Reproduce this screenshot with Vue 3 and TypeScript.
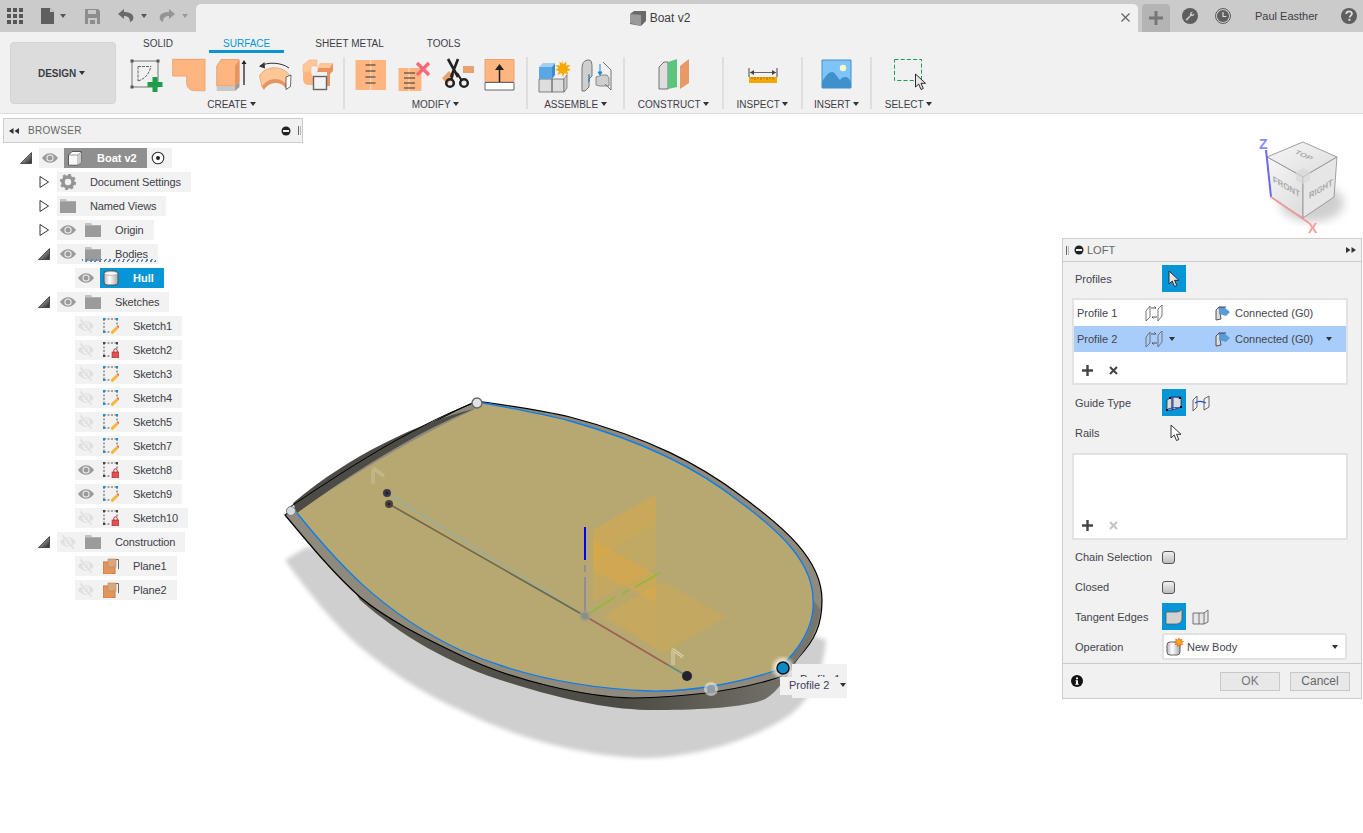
<script setup lang="ts">
interface TreeRow {
  label: string
  level: number
  exp?: 'open' | 'closed'
  eye?: 'on' | 'off'
  icon: string
  root?: boolean
  active?: boolean
  hatch?: boolean
}

const rows: TreeRow[] = [
  { label: 'Boat v2', level: 0, exp: 'open', eye: 'on', icon: 'comp', root: true },
  { label: 'Document Settings', level: 1, exp: 'closed', icon: 'gear' },
  { label: 'Named Views', level: 1, exp: 'closed', icon: 'folder' },
  { label: 'Origin', level: 1, exp: 'closed', eye: 'on', icon: 'folder' },
  { label: 'Bodies', level: 1, exp: 'open', eye: 'on', icon: 'folder', hatch: true },
  { label: 'Hull', level: 2, eye: 'on', icon: 'body', active: true },
  { label: 'Sketches', level: 1, exp: 'open', eye: 'on', icon: 'folder' },
  { label: 'Sketch1', level: 2, eye: 'off', icon: 'sketch' },
  { label: 'Sketch2', level: 2, eye: 'off', icon: 'sketch-lock' },
  { label: 'Sketch3', level: 2, eye: 'off', icon: 'sketch' },
  { label: 'Sketch4', level: 2, eye: 'off', icon: 'sketch' },
  { label: 'Sketch5', level: 2, eye: 'off', icon: 'sketch' },
  { label: 'Sketch7', level: 2, eye: 'off', icon: 'sketch' },
  { label: 'Sketch8', level: 2, eye: 'on', icon: 'sketch-lock' },
  { label: 'Sketch9', level: 2, eye: 'on', icon: 'sketch' },
  { label: 'Sketch10', level: 2, eye: 'off', icon: 'sketch-lock' },
  { label: 'Construction', level: 1, exp: 'open', eye: 'off', icon: 'folder' },
  { label: 'Plane1', level: 2, eye: 'off', icon: 'plane' },
  { label: 'Plane2', level: 2, eye: 'off', icon: 'plane' }
]

const tabs = ['SOLID', 'SURFACE', 'SHEET METAL', 'TOOLS']

// hull outlines, traced from the model view
const bluePath =
  'M297 513C335 560 380 612 460 650C510 672 570 688 650 691C690 692 740 683 777 670C800 650 815 625 813 600C813 565 785 535 740 502C700 470 645 442 570 421C540 413 510 408 483 403'
const deckPath = bluePath + 'L473 410C420 435 350 475 297 513Z'
const rimPath =
  'M285 515C345 475 410 430 477 401C510 406 540 410 570 417C650 438 700 465 740 495C785 528 822 560 822 600C822 625 815 640 798 658L780 677C740 690 690 697 633 698C585 697 510 680 460 655C420 636 385 618 360 597C335 575 310 545 285 515Z'
const underPath =
  'M355 592 360 600C400 635 450 665 510 683C570 702 620 711 660 710C700 710 745 707 763 700C775 695 790 675 800 655L700 640Z'
</script>

<template>
  <div class="app">
    <svg class="sprite" width="0" height="0">
      <defs>
        <linearGradient id="tri" x1="0" y1="0" x2="1" y2="1">
          <stop offset="0" stop-color="#ddd" />
          <stop offset="1" stop-color="#222" />
        </linearGradient>
        <linearGradient id="cyl" x1="0" y1="0" x2="1" y2="0">
          <stop offset="0" stop-color="#b9b9b9" />
          <stop offset=".4" stop-color="#fff" />
          <stop offset="1" stop-color="#aaa" />
        </linearGradient>
        <linearGradient id="face" x1="0" y1="0" x2="1" y2="1">
          <stop offset="0" stop-color="#f7f7f7" />
          <stop offset="1" stop-color="#dcdcdc" />
        </linearGradient>
        <linearGradient id="under" x1="0" y1="0" x2="1" y2="0">
          <stop offset="0" stop-color="#5a5850" />
          <stop offset=".6" stop-color="#4c4b44" />
          <stop offset="1" stop-color="#77746a" />
        </linearGradient>
        <filter id="blur2"><feGaussianBlur stdDeviation="2" /></filter>
        <filter id="blur5"><feGaussianBlur stdDeviation="5" /></filter>
      </defs>
      <symbol id="exp-open" viewBox="0 0 12 12"><path d="M.5 11.500 11.500.5v11z" fill="url(#tri)" stroke="#333" stroke-width=".8" /></symbol>
      <symbol id="exp-closed" viewBox="0 0 12 12"><path d="M2 .5 10.500 6 2 11.500z" fill="#fff" stroke="#333" /></symbol>
      <symbol id="eye-on" viewBox="0 0 16 16"><path d="M0 8c4-6.400 12-6.400 16 0-4 6.400-12 6.400-16 0z" fill="#9b9b9b" /><circle cx="8" cy="8" r="3.600" fill="#f2f2f2" /><circle cx="8" cy="8" r="2.500" fill="#9b9b9b" /></symbol>
      <symbol id="eye-off" viewBox="0 0 16 16"><path d="M0 8c4-6.400 12-6.400 16 0-4 6.400-12 6.400-16 0z" fill="#e0e0e0" /><circle cx="8" cy="8" r="3.400" fill="#f2f2f2" /><circle cx="8" cy="8" r="2.200" fill="#e0e0e0" /><path d="M3 2l10 12" stroke="#f2f2f2" stroke-width="3" /><path d="M2.500 1.500l11 13" stroke="#dcdcdc" stroke-width="1.400" /></symbol>
      <symbol id="folder" viewBox="0 0 16 16"><path d="M0 1h6l1 2h9v1H0z" fill="#c4c4c4" /><path d="M0 3.500h16V15H0z" fill="#9b9b9b" /></symbol>
      <symbol id="gear" viewBox="0 0 16 16"><circle cx="8" cy="8" r="5" fill="none" stroke="#959595" stroke-width="3.600" /><circle cx="8" cy="8" r="7" fill="none" stroke="#959595" stroke-width="2.400" stroke-dasharray="2.800 2.700" /></symbol>
      <symbol id="comp" viewBox="0 0 16 16"><path d="M1.500 5 5 1.500h9.500V12L11 15H1.500z" fill="#fff" stroke="#555" /><path d="M2 5h9v9.500H2z" fill="#f8f8f8" /><path d="M11 5v10M1.500 5H11l3.500-3.500" fill="none" stroke="#777" stroke-width=".7" /><path d="M11.300 5.400l3-3V12l-3 2.700z" fill="#ccc" /></symbol>
      <symbol id="body" viewBox="0 0 16 16"><rect x="1" y="1" width="14" height="14" rx="3" fill="url(#cyl)" stroke="#555" /><ellipse cx="8" cy="3.400" rx="6.500" ry="2" fill="#f6f6f6" stroke="#888" stroke-width=".5" /></symbol>
      <symbol id="sketch" viewBox="0 0 16 16"><path d="M1 1h13M1 1v13M14 1v6M1 14h6" fill="none" stroke="#555" stroke-dasharray="2 1.500" /><path d="M0 0h2v2H0zM13 0h2v2h-2zM0 13h2v2H0z" fill="#0696d7" /><path d="M8.500 16l-.6-2.400 6-5.600 2 2-6 6z" fill="#f6b73c" /><path d="M13.900 8l.8-.8 1.800 1.900-.6.8z" fill="#e84b4b" /></symbol>
      <symbol id="sketch-lock" viewBox="0 0 16 16"><path d="M1 1h13M1 1v13M14 1v6M1 14h6" fill="none" stroke="#555" stroke-dasharray="2 1.500" /><path d="M0 0h2v2H0zM13 0h2v2h-2zM0 13h2v2H0z" fill="#444" /><rect x="9" y="10" width="7" height="6" fill="#d9534f" stroke="#b02a2a" stroke-width=".6" /><path d="M10.800 10V8.500a1.700 1.700 0 0 1 3.400 0V10" fill="none" stroke="#b02a2a" /></symbol>
      <symbol id="plane" viewBox="0 0 16 16"><path d="M6 1.500h9.500V11" fill="none" stroke="#666" /><rect x="0" y="4" width="12" height="12" fill="#e2955a" stroke="#c77a40" /><rect x="5" y="1" width="8" height="8" fill="#dba57e" stroke="#c08a62" stroke-width=".6" /></symbol>
      <symbol id="swap" viewBox="0 0 18 18"><path d="M1 7l4-5v11l-4 4zM13 5l4-4v11l-4 5z" fill="none" stroke="#666" stroke-width=".9" /><path d="M6 4h5l-1.500-1.500M12 13H7l1.500 1.500" fill="none" stroke="#444" stroke-width=".9" /></symbol>
      <symbol id="conn" viewBox="0 0 16 16"><path d="M1 15V5l3-3 2 12z" fill="#ddd" stroke="#444" stroke-width=".9" /><path d="M4 2h5l6 5-4 4-7-2z" fill="#5b9bd5" /><path d="M4 2l7 0" stroke="#333" stroke-width=".9" /></symbol>
      <symbol id="cursor" viewBox="0 0 14 18"><path d="M2 1v13l3.200-3 2.300 5.500 2.300-1-2.300-5.200H12z" fill="#fff" stroke="#333" stroke-width="1" stroke-linejoin="round" /></symbol>
      <symbol id="cursor-w" viewBox="0 0 14 18"><path d="M2 1v13l3.200-3 2.300 5.500 2.300-1-2.300-5.200H12z" fill="#e8e8e8" stroke="#2b2b2b" stroke-width="1" stroke-linejoin="round" /></symbol>
      <symbol id="mark" viewBox="0 0 10 10"><circle cx="5" cy="5" r="4.500" fill="#222" /><rect x="2" y="4" width="6" height="2" fill="#f1f1f1" /></symbol>
    </svg>

    <header class="topbar">
      <div class="quick">
        <svg class="q-grid" width="16" height="16" viewBox="0 0 16 16"><path d="M0 0h4v4H0zM6 0h4v4H6zM12 0h4v4h-4zM0 6h4v4H0zM6 6h4v4H6zM12 6h4v4h-4zM0 12h4v4H0zM6 12h4v4H6zM12 12h4v4h-4z" fill="#555" /></svg>
        <svg class="q-file" width="14" height="16" viewBox="0 0 14 16"><path d="M0 0h9l4 4v12H0z" fill="#5f5f5f" /><path d="M9 0v4h4" fill="#c8c8c8" /></svg>
        <span class="caret q-c1"></span>
        <svg class="q-save" width="15" height="15" viewBox="0 0 15 15"><path d="M0 0h13l2 2v13H0z" fill="#8d8d8d" /><path d="M3 1h8v4H3zM3 9h9v6H3z" fill="#c8c8c8" /><path d="M5 11h5v4H5z" fill="#8d8d8d" /></svg>
        <svg class="q-undo" width="16" height="14" viewBox="0 0 16 14"><path d="M6 0 0 5l6 5V7c4 0 6 2 6 6 3-1 4-4 3-6-1-3-5-4-9-4z" fill="#6a6a6a" /></svg>
        <span class="caret q-c2"></span>
        <svg class="q-redo" width="16" height="14" viewBox="0 0 16 14"><path d="M10 0l6 5-6 5V7c-4 0-6 2-6 6-3-1-4-4-3-6 1-3 5-4 9-4z" fill="#959595" /></svg>
        <span class="caret q-c3"></span>
      </div>
      <div class="doc-tab">
        <div class="doc-title">
          <svg width="16" height="15" viewBox="0 0 16 15"><path d="M0 3l4-3h12v10l-5 5-11-2z" fill="#6a6a6a" /><path d="M0 3l11 1v11L0 12z" fill="#9a9a9a" /></svg>
          <span>Boat v2</span>
        </div>
        <svg class="doc-x" width="9" height="9" viewBox="0 0 9 9"><path d="M.5.500l8 8M8.500.500l-8 8" stroke="#666" stroke-width="1.300" /></svg>
      </div>
      <div class="plus-tab">
        <svg width="14" height="14" viewBox="0 0 14 14"><path d="M5.500 0h3v5.500H14v3H8.500V14h-3V8.500H0v-3h5.500z" fill="#777" /></svg>
      </div>
      <svg class="t-wrench" width="16" height="16" viewBox="0 0 16 16"><circle cx="8" cy="8" r="8" fill="#5e5e5e" /><path d="M3.500 11.500 8 7.200c-.6-1.800.8-3.700 3-3.500L9.300 5.500l1.200 1.300 1.900-1.600c.2 2.100-1.700 3.500-3.500 2.900L5 12.800z" fill="#cbcbcb" /></svg>
      <svg class="t-clock" width="16" height="16" viewBox="0 0 16 16"><circle cx="8" cy="8" r="7.500" fill="none" stroke="#5e5e5e" /><circle cx="8" cy="8" r="6" fill="#5e5e5e" /><path d="M8 4v4.500h3.300" fill="none" stroke="#ddd" stroke-width="1.200" /></svg>
      <span class="t-user">Paul Easther</span>
      <svg class="t-help" width="16" height="16" viewBox="0 0 16 16"><circle cx="8" cy="8" r="8" fill="#5e5e5e" /><path d="M5.300 6c0-3.400 5.600-3.400 5.600-.3 0 1.900-2.200 2-2.200 3.700" fill="none" stroke="#ddd" stroke-width="1.800" /><rect x="7.400" y="10.800" width="2" height="2" fill="#ddd" /></svg>
    </header>

    <section class="ribbon">
      <button class="design">DESIGN <span class="caret"></span></button>
      <div class="ribbon-main">
        <nav class="tabs">
          <span v-for="t in tabs" :key="t" class="tab" :class="{ on: t === 'SURFACE' }">{{ t }}</span>
        </nav>
        <div class="groups">
          <div class="group g-create">
            <div class="tools">
              <svg class="tool" viewBox="0 0 36 36">
                <path d="M4 4h26v26H4z" fill="none" stroke="#555" stroke-width=".8" />
                <path d="M2.500 2.500h3v3h-3zM28.500 2.500h3v3h-3zM2.500 28.500h3v3h-3z" fill="#555" />
                <path d="M10 24C17 22 21 17 23 9.500M10 9.500h13M10 9.500V24" fill="none" stroke="#666" stroke-dasharray="3 1" />
                <path d="M24.500 20h5v5h5v5h-5v5h-5v-5h-5v-5h5z" fill="#1f9e4a" />
              </svg>
              <svg class="tool" viewBox="0 0 36 36"><path d="M1.700 2.300H34v31.400H24c-5 0-8.300-3.400-8.300-8V19H1.700z" fill="#ffb57f" stroke="#eda472" /></svg>
              <svg class="tool" viewBox="0 0 36 36">
                <path d="M2.700 9 7 2.500h18V25l-4 4H2.700z" fill="#ffb57f" stroke="#d08b58" stroke-width=".6" />
                <path d="M21 8.500 25.500 3v22L21 29z" fill="#e79462" />
                <path d="M2.700 29H21v5H2.700z" fill="#c8c8c8" /><path d="M21 29l4.500-4v5L21 34z" fill="#9d9d9d" />
                <path d="M30 28V6" stroke="#222" stroke-width="1.300" /><path d="M27.500 7 30 3l2.500 4z" fill="#222" />
              </svg>
              <svg class="tool" viewBox="0 0 36 36">
                <path d="M2.500 19C8 8 27 8 33 19l-3 10C25 20 11 20 5 30z" fill="#ffc797" stroke="#e79462" stroke-width=".7" />
                <path d="M5 30c6-10 20-10 25-1l-1.500 2C24 24 12 24 7 33z" fill="#e79462" />
                <path d="M29 20l5-2-.5 11.500-4.500 3z" fill="#fff" stroke="#444" stroke-width=".8" />
                <path d="M3 9C10 5 24 5 32 11" fill="none" stroke="#333" stroke-width="1" /><path d="M7.500 5 2 9.500l6 2z" fill="#333" />
              </svg>
              <svg class="tool" viewBox="0 0 36 36">
                <path d="M3 8 9 3h8v6h-6v6h-8z" fill="#ffc797" stroke="#ecb184" stroke-width=".6" />
                <path d="M3 15h8l2 6v7H8c-3 0-5-3-5-6z" fill="#ffb57f" />
                <path d="M19 9l3-3h11v8l-3 3v12h-3V15H17z" fill="#e79462" />
                <path d="M20 6h13l-3 5H17z" fill="#ffc797" />
                <rect x="13.500" y="19.500" width="13" height="13" fill="#f4f4f4" stroke="#666" stroke-width="1.400" />
              </svg>
            </div>
            <div class="g-label">CREATE <span class="caret"></span></div>
          </div>
          <div class="group g-modify">
            <div class="tools">
              <svg class="tool" viewBox="0 0 36 36">
                <path d="M2.500 3H33v30H2.500z" fill="#ffb57f" /><path d="M17.700 3v30" stroke="#f9e3d0" />
                <path d="M12.500 8h10M12.500 14h10M12.500 20h10M12.500 26h10" stroke="#333" stroke-width="1" />
              </svg>
              <svg class="tool" viewBox="0 0 36 36">
                <path d="M2.500 11h23v23h-23z" fill="#ffb57f" /><path d="M13 11v23" stroke="#f9e3d0" />
                <path d="M8 16h11M8 21h11M8 26h11M8 31h11" stroke="#333" stroke-width="1" />
                <path d="M21 6l12 12M33 6 21 18" stroke="#f66a78" stroke-width="3.400" />
              </svg>
              <svg class="tool" viewBox="0 0 36 36">
                <path d="M24 9h11v7H24zM3 21l7-7 5 6-7 7z" fill="#e7a26e" />
                <path d="M9 2l10 18M19 2 12 20" stroke="#222" stroke-width="2.600" />
                <circle cx="11" cy="26" r="3.800" fill="none" stroke="#222" stroke-width="2.500" />
                <circle cx="25" cy="26" r="3.800" fill="none" stroke="#222" stroke-width="2.500" />
                <path d="M18 16l5 8M14 17l-2 6" stroke="#222" stroke-width="2.200" />
              </svg>
              <svg class="tool" viewBox="0 0 36 36">
                <path d="M3 2.500h29v22H3z" fill="#ffb57f" stroke="#e8a071" />
                <path d="M3 25.500h29v7.500H3z" fill="#fff" stroke="#666" />
                <path d="M17.500 25V12" stroke="#222" stroke-width="1.500" /><path d="M13 13l4.500-6 4.500 6z" fill="#222" />
              </svg>
            </div>
            <div class="g-label">MODIFY <span class="caret"></span></div>
          </div>
          <div class="group g-assemble">
            <div class="tools">
              <svg class="tool" viewBox="0 0 36 36">
                <path d="M3 22h13v13H3zM16 22h12v13H16z" fill="#dedede" stroke="#666" stroke-width=".8" />
                <path d="M28 22l3-4v13l-3 4z" fill="#cfcfcf" stroke="#666" stroke-width=".7" />
                <path d="M3 10h13v12H3z" fill="#5ba7e5" /><path d="M3 10l4-4h12l-3 4z" fill="#9fd0f3" /><path d="M16 10l3-4v12l-3 4z" fill="#3f8cc9" />
                <path d="M26 3l1.500 4 3-2.500-.5 4 4.500-.5-3 3 3.500 2-4 1 1.500 4-4-2-1.500 4-1.500-4-4 2 1.500-4-4-1 3.500-2-3-3 4.500.5-.5-4 3 2.500z" fill="#f5a800" />
              </svg>
              <svg class="tool" viewBox="0 0 36 36">
                <path d="M3 12c0-6 2-9 7-9 3 0 3 5 3 9v7l-3 3v8l-4 4H3z" fill="#cfcfcf" stroke="#666" stroke-width=".9" />
                <path d="M17 20l6-2h5l2 3v8h-9l-4-1z" fill="#cfcfcf" stroke="#666" stroke-width=".7" />
                <path d="M24 5l8 8v20l-6-6M10 18v7" fill="none" stroke="#666" stroke-width=".9" />
                <path d="M21 7v10M21 18l-2-3h4z" stroke="#1b8ad2" fill="#1b8ad2" />
                <path d="M10 17v8" stroke="#1b8ad2" />
              </svg>
            </div>
            <div class="g-label">ASSEMBLE <span class="caret"></span></div>
          </div>
          <div class="group g-construct">
            <div class="tools">
              <svg class="tool" viewBox="0 0 36 36">
                <path d="M3 10l5-5h4v27H3z" fill="#dedede" stroke="#555" stroke-width=".8" />
                <path d="M12 5l9-3v28l-9 2z" fill="#5cc47d" />
                <path d="M24 9l9-7v24l-9 6z" fill="#e79a66" />
              </svg>
            </div>
            <div class="g-label">CONSTRUCT <span class="caret"></span></div>
          </div>
          <div class="group g-inspect">
            <div class="tools">
              <svg class="tool" viewBox="0 0 36 36">
                <path d="M4 11v9M32 11v9" stroke="#444" />
                <path d="M5 15.500h26" stroke="#666" /><path d="M9 13v5l-4-2.500zM27 13v5l4-2.500z" fill="#444" />
                <path d="M4 20h28v6H4z" fill="#f5a800" />
                <path d="M7 20v2M10 20v3M13 20v2M16 20v3M19 20v2M22 20v3M25 20v2M28 20v3" stroke="#8a5f00" stroke-width=".7" />
              </svg>
            </div>
            <div class="g-label">INSPECT <span class="caret"></span></div>
          </div>
          <div class="group g-insert">
            <div class="tools">
              <svg class="tool" viewBox="0 0 36 36">
                <path d="M3 3h29v28H3z" fill="#7fc4f7" stroke="#3f90cc" />
                <circle cx="24" cy="11" r="3.200" fill="#fbf6c6" />
                <path d="M3 25c4-7 7-10 10-10s5 5 8 8c2-3 4-3 6-3s4 3 5 5v6H3z" fill="#3f90cc" />
              </svg>
            </div>
            <div class="g-label">INSERT <span class="caret"></span></div>
          </div>
          <div class="group g-select">
            <div class="tools">
              <svg class="tool" viewBox="0 0 36 36">
                <path d="M3.500 2.500h27v21h-27z" fill="none" stroke="#1f9e4a" stroke-dasharray="4 2.200" />
                <use href="#cursor-w" x="22.500" y="16" width="14" height="18" />
              </svg>
            </div>
            <div class="g-label">SELECT <span class="caret"></span></div>
          </div>
        </div>
      </div>
    </section>

    <main class="canvas">
      <svg class="model" viewBox="0 114 1363 719">
        <!-- shadow -->
        <path d="M307 547 285 560C310 595 335 625 360 647C390 672 425 695 460 710C520 740 590 758 650 758C710 755 760 735 790 715C815 695 823 670 826 640L700 600Z" fill="#cfcfcf" filter="url(#blur2)" />
        <!-- hull underside -->
        <path :d="underPath" fill="url(#under)" />
        <!-- rim -->
        <path :d="rimPath" fill="#8f8a7c" stroke="#000" stroke-width="1.200" />
        <path d="M780 676C798 662 815 640 821 610L813 600C815 630 800 650 777 670Z" fill="#77756c" />
        <!-- deck -->
        <path :d="deckPath" fill="#b6a870" />
        <path d="M297 513C345 478 415 432 474 409 420 422 350 455 293 503Z" fill="#4c4b45" />
        <path d="M290 507C345 470 410 428 471 404" fill="none" stroke="#000" stroke-width="1" />
        <path :d="bluePath" fill="none" stroke="#0a7df0" stroke-width="1.300" />
        <!-- planes -->
        <path d="M593 530 656 494V568L593 602Z" fill="#f0a830" opacity=".2" />
        <path d="M593 530 656 494V524L593 560Z" fill="#f0a830" opacity=".15" />
        <path d="M593 540 656 575V602L593 570Z" fill="#f0a830" opacity=".35" />
        <path d="M593 570 656 602V648L593 602Z" fill="#f0a830" opacity=".07" />
        <path d="M602 617 663 581 726 617 663 653Z" fill="#f0a830" opacity=".22" />
        <!-- origin lines -->
        <path d="M387 493 585 616" stroke="#98ae9e" stroke-width="2" opacity=".8" />
        <path d="M389 504 585 616" stroke="#6e674c" stroke-width="1.600" />
        <path d="M585 616 668 665" stroke="#9c5f55" stroke-width="1.600" />
        <path d="M668 665 687 676" stroke="#5d8a8a" stroke-width="1.600" />
        <path d="M585 527V560" stroke="#0000f0" stroke-width="2" />
        <path d="M585 565V572M585 577V612" stroke="#8f87a3" stroke-width="1.800" />
        <path d="M590 613 615 597M622 594 629 590M635 587 660 573" stroke="#8fb83c" stroke-width="1.600" />
        <circle cx="585" cy="616" r="6" fill="#a0a08a" opacity=".7" />
        <circle cx="585" cy="616" r="3.500" fill="#8d8f84" />
        <circle cx="387" cy="493" r="4" fill="#3b384a" /><circle cx="387" cy="493" r="1.500" fill="#222" />
        <circle cx="389" cy="504" r="4" fill="#47433a" /><circle cx="389" cy="504" r="1.500" fill="#222" />
        <circle cx="687" cy="676" r="5" fill="#23222e" />
        <!-- pins -->
        <path d="M373 468 384 476M373 470V484" fill="none" stroke="#cdc096" stroke-width="3" />
        <path d="M373 468 384 476M373 470V484" fill="none" stroke="#b6a870" stroke-width="1" />
        <path d="M672 649 683 657M673 651V665" fill="none" stroke="#dfd4ac" stroke-width="3" />
        <path d="M672 649 683 657M673 651V665" fill="none" stroke="#b6a870" stroke-width="1" />
        <!-- handles -->
        <circle cx="477" cy="403" r="5" fill="#dfe3e3" stroke="#666" stroke-width="1.400" />
        <circle cx="291" cy="511" r="4.500" fill="#d5d9d9" stroke="#777" />
        <circle cx="711" cy="689" r="7" fill="#e8e8e8" opacity=".6" />
        <circle cx="711" cy="689" r="4" fill="#8d9bab" />
        <circle cx="783" cy="668" r="10" fill="#fff" opacity=".8" filter="url(#blur2)" />
        <circle cx="783" cy="668" r="6" fill="#0c8ac6" stroke="#101010" stroke-width="1.500" />

        <!-- view cube -->
        <ellipse cx="1312" cy="203" rx="32" ry="19" fill="#b0b0b0" opacity=".6" filter="url(#blur5)" />
        <path d="M1303 142 1337 157 1303 177 1267 157Z" fill="url(#face)" stroke="#8a8a8a" stroke-width=".8" />
        <path d="M1267 157 1303 177V218L1271 197Z" fill="url(#face)" stroke="#8a8a8a" stroke-width=".8" />
        <path d="M1303 177 1337 157 1334 197 1303 218Z" fill="#e6e6e6" stroke="#8a8a8a" stroke-width=".8" />
        <path d="M1296 172 1303 168 1310 172 1310 180 1303 184 1296 180Z" fill="#d9d9d9" opacity=".7" />
        <text transform="matrix(.9 .4 -.55 .5 1294 153)" class="cube-t">TOP</text>
        <text transform="matrix(.87 .5 .05 1 1273 182)" class="cube-t">FRONT</text>
        <text transform="matrix(.85 -.5 0 1 1309 199)" class="cube-t">RIGHT</text>
        <path d="M1266 150 1271 197" stroke="#6b6bf0" stroke-width="2" />
        <path d="M1271 197 1309 223" stroke="#f09a9a" stroke-width="2" />
        <text x="1259" y="149" class="axis az">Z</text>
        <text x="1308" y="233" class="axis ax">X</text>
      </svg>

      <div class="browser-bar">
        <svg width="10" height="6" viewBox="0 0 10 6"><path d="M4.500 0v6L0 3zM10 0v6L5.500 3z" fill="#333" /></svg>
        <span class="browser-title">BROWSER</span>
        <svg class="bar-min" width="10" height="10"><use href="#mark" /></svg>
        <i class="grip"></i>
      </div>

      <div class="tree">
        <div v-for="r in rows" :key="r.label" class="row" :class="`lvl-${r.level}`">
          <span class="exp">
            <svg v-if="r.exp" width="12" height="12"><use :href="`#exp-${r.exp}`" /></svg>
          </span>
          <div class="chip" :class="{ hatch: r.hatch }">
            <svg v-if="r.eye" class="eye" width="16" height="16"><use :href="`#eye-${r.eye}`" /></svg>
            <div class="node" :class="{ root: r.root, active: r.active, 'with-eye': r.eye }">
              <svg width="16" height="16"><use :href="`#${r.icon}`" /></svg>
              <span class="name">{{ r.label }}</span>
            </div>
            <svg v-if="r.root" class="radio" width="14" height="14" viewBox="0 0 14 14">
              <circle cx="7" cy="7" r="5.800" fill="#fff" stroke="#333" stroke-width="1.100" />
              <circle cx="7" cy="7" r="2" fill="#222" />
            </svg>
          </div>
        </div>
      </div>

      <div class="tip tip-back">Profile 1</div>
      <div class="tip tip-front">Profile 2 <span class="caret"></span></div>

      <aside class="loft">
        <div class="loft-head">
          <i class="grip"></i>
          <svg width="10" height="10"><use href="#mark" /></svg>
          <span class="loft-title">LOFT</span>
          <svg class="loft-ff" width="10" height="6" viewBox="0 0 10 6"><path d="M0 0v6l4.500-3zM5.500 0v6L10 3z" fill="#333" /></svg>
        </div>
        <div class="field f-profiles">
          <label>Profiles</label>
          <span class="pick on"><svg width="14" height="18"><use href="#cursor-w" /></svg></span>
        </div>
        <div class="table t-profiles">
          <div class="p-row">
            <span>Profile 1</span>
            <svg width="18" height="18"><use href="#swap" /></svg>
            <i></i><i></i>
            <svg width="16" height="16"><use href="#conn" /></svg>
            <span>Connected (G0)</span>
          </div>
          <div class="p-row sel">
            <span>Profile 2</span>
            <svg width="18" height="18"><use href="#swap" /></svg>
            <span class="caret"></span><i></i>
            <svg width="16" height="16"><use href="#conn" /></svg>
            <span>Connected (G0)</span>
            <span class="caret"></span>
          </div>
          <div class="t-actions">
            <svg width="11" height="11" viewBox="0 0 11 11"><path d="M4.300 0h2.400v4.300H11v2.400H6.700V11H4.300V6.700H0V4.300h4.300z" fill="#444" /></svg>
            <svg width="9" height="9" viewBox="0 0 9 9"><path d="M1 1l7 7M8 1 1 8" stroke="#444" stroke-width="2" /></svg>
          </div>
        </div>
        <div class="field f-guide">
          <label>Guide Type</label>
          <span class="pick on">
            <svg width="18" height="18" viewBox="0 0 18 18">
              <path d="M2 6l5-3v13l-5 0zM7 3h9v10l-9 3z" fill="#ddd" stroke="#222" stroke-width=".7" />
              <path d="M4 4c3-1.500 7-1.500 10 0M3 15c4-1.500 9-2 12-1M8 3v13" fill="none" stroke="#1d4fd0" />
              <path d="M1 15h2v2H1zM15 12h2v2h-2zM4 3h2v2H4zM14 3h2v2h-2z" fill="#000" />
            </svg>
          </span>
          <svg class="alt" width="18" height="18" viewBox="0 0 18 18">
            <path d="M1 6l4-4v11l-4 4zM12 5l5-3v11l-5 3z" fill="none" stroke="#555" stroke-width=".9" />
            <path d="M3 9c3-2 7-2 11 0" fill="none" stroke="#1d4fd0" stroke-width="1.200" />
          </svg>
        </div>
        <div class="field f-rails">
          <label>Rails</label>
          <svg class="rail-cursor" width="14" height="18"><use href="#cursor" /></svg>
        </div>
        <div class="table t-rails">
          <div class="t-actions">
            <svg width="11" height="11" viewBox="0 0 11 11"><path d="M4.300 0h2.400v4.300H11v2.400H6.700V11H4.300V6.700H0V4.300h4.300z" fill="#444" /></svg>
            <svg width="9" height="9" viewBox="0 0 9 9"><path d="M1 1l7 7M8 1 1 8" stroke="#c4c4c4" stroke-width="2" /></svg>
          </div>
        </div>
        <div class="field f-chain"><label>Chain Selection</label><i class="check"></i></div>
        <div class="field f-closed"><label>Closed</label><i class="check"></i></div>
        <div class="field f-tangent">
          <label>Tangent Edges</label>
          <span class="pick on">
            <svg width="18" height="18" viewBox="0 0 18 18"><path d="M1 4h10c3 0 5-1 6-3v9c0 4-3 6-6 6H1z" fill="#d2d2d2" stroke="#555" stroke-width=".8" /></svg>
          </span>
          <svg class="alt" width="18" height="18" viewBox="0 0 18 18"><path d="M1 5h11l4-3v12l-4 2H1zM7 5v11M12 5v11" fill="#e6e6e6" stroke="#555" stroke-width=".8" /></svg>
        </div>
        <div class="field f-op">
          <label>Operation</label>
          <div class="select">
            <svg width="18" height="18" viewBox="0 0 18 18">
              <rect x="1" y="4" width="13" height="13" rx="3" fill="url(#cyl)" stroke="#555" stroke-width=".9" />
              <path d="M13 0l.8 2 2-1-.6 2 2.300.5-2 1.200 1.500 1.800-2.300-.2-.2 2.200-1.500-1.700-1.500 1.700-.2-2.200-2.300.2 1.500-1.800-2-1.200L10.200 3l-.6-2 2 1z" fill="#f5a800" stroke="#e0402c" stroke-width=".5" />
            </svg>
            <span>New Body</span>
            <span class="caret"></span>
          </div>
        </div>
        <div class="loft-foot">
          <svg width="12" height="12" viewBox="0 0 12 12"><circle cx="6" cy="6" r="6" fill="#111" /><path d="M5 2.500h2v1.800H5zM4.500 5.300H7v3.500h.8v1H4.300v-1H5V6.300h-.5z" fill="#fff" /></svg>
          <button class="btn b-ok">OK</button>
          <button class="btn b-cancel">Cancel</button>
        </div>
      </aside>
    </main>
  </div>
</template>

<style scoped>
.app {
  height: 833px;
  display: flex;
  flex-direction: column;
  font-family: 'Liberation Sans', Arial, sans-serif;
  font-size: 11px;
  color: #3d3d48;
  background: #fff;
  overflow: hidden;
}
.sprite {
  display: block;
  height: 0;
}
.caret {
  display: inline-block;
  width: 0;
  height: 0;
  border-left: 3.5px solid transparent;
  border-right: 3.5px solid transparent;
  border-top: 4px solid #333;
  vertical-align: 2px;
}

/* top bar */
.topbar {
  height: 32px;
  background: #cbcbcb;
  display: flex;
  align-items: center;
  flex: none;
}
.quick {
  width: 196px;
  flex: none;
  display: flex;
  align-items: center;
}
.q-grid { margin-left: 7px; }
.q-file { margin-left: 18px; }
.q-c1 { margin-left: 5px; border-top-color: #555; }
.q-save { margin-left: 19px; }
.q-undo { margin-left: 18px; }
.q-c2 { margin-left: 7px; border-top-color: #555; }
.q-redo { margin-left: 12px; }
.q-c3 { margin-left: 7px; border-top-color: #999; }
.doc-tab {
  width: 942px;
  height: 28px;
  margin-top: 4px;
  background: #f1f1f1;
  border-radius: 5px 5px 0 0;
  flex: none;
  display: flex;
  align-items: center;
  justify-content: center;
  position: relative;
}
.doc-title {
  display: flex;
  align-items: center;
  gap: 4px;
  font-size: 12px;
  margin-left: -14px;
}
.doc-x {
  position: absolute;
  right: 8px;
  top: 9px;
}
.plus-tab {
  width: 28px;
  height: 28px;
  margin-top: 4px;
  margin-left: 4px;
  background: #b4b4b4;
  border-radius: 4px 4px 0 0;
  display: flex;
  align-items: center;
  justify-content: center;
  flex: none;
}
.t-wrench { margin-left: 12px; }
.t-clock { margin-left: 17px; }
.t-user { margin-left: 24px; width: 86px; }

/* ribbon */
.ribbon {
  height: 82px;
  flex: none;
  background: #f1f1f1;
  border-bottom: 1px solid #dcdcdc;
  box-sizing: border-box;
  display: flex;
}
.design {
  width: 106px;
  height: 62px;
  margin: 10px 0 0 10px;
  background: #dcdcdc;
  border: 1px solid #d4d4d4;
  border-radius: 4px;
  font: bold 10px 'Liberation Sans', Arial, sans-serif;
  color: #3d3d48;
  padding: 0 3px 0 0;
}
.ribbon-main {
  margin-left: 4px;
  display: flex;
  flex-direction: column;
}
.tabs {
  display: flex;
  height: 21px;
  padding-left: 9px;
  gap: 17px;
}
.tab {
  font-size: 10px;
  padding: 0 14px;
  line-height: 24px;
  height: 21px;
  box-sizing: border-box;
}
.tab:first-child { margin-right: 5px; }
.tab:nth-child(3) { margin-right: -2px; }
.tab.on {
  color: #0696d7;
  border-bottom: 3px solid #0696d7;
}
.groups {
  display: flex;
  margin-top: 4px;
}
.group {
  display: flex;
  flex-direction: column;
  align-items: center;
  box-sizing: border-box;
  height: 52px;
  border-right: 2px solid #dedede;
}
.g-create { width: 225px; }
.g-modify { width: 183px; }
.g-assemble { width: 97px; }
.g-construct { width: 99px; }
.g-inspect { width: 79px; }
.g-insert { width: 69px; }
.g-select { width: 73px; border-right: none; }
.tools {
  display: flex;
  gap: 7px;
  height: 36px;
}
.tool {
  width: 36px;
  height: 36px;
  display: block;
}
.g-label {
  font-size: 10px;
  line-height: 16px;
  margin-top: 4px;
  white-space: nowrap;
}

/* canvas */
.canvas {
  flex: 1;
  position: relative;
  background: #fff;
}
.model {
  display: block;
  width: 1363px;
  height: 719px;
}
.cube-t {
  font: bold 9px 'Liberation Sans', Arial, sans-serif;
  fill: #a9a9a9;
}
.axis {
  font: bold 14px 'Liberation Sans', Arial, sans-serif;
}
.az { fill: #8a8afa; }
.ax { fill: #ff9a9a; }

/* browser */
.browser-bar {
  position: absolute;
  left: 3px;
  top: 4px;
  width: 300px;
  height: 25px;
  box-sizing: border-box;
  background: #f1f1f1;
  border: 1px solid #ccc;
  display: flex;
  align-items: center;
  padding-left: 5px;
}
.browser-title {
  margin-left: 9px;
  font-size: 10px;
  letter-spacing: .3px;
  color: #666;
}
.bar-min { margin-left: auto; }
.grip {
  display: block;
  width: 3px;
  height: 9px;
  border-left: 1px solid #666;
  border-right: 1px solid #bbb;
  box-sizing: border-box;
}
.browser-bar .grip { margin: 0 1px 0 7px; }
.tree {
  position: absolute;
  left: 0;
  top: 34px;
  display: flex;
  flex-direction: column;
  gap: 4px;
}
.row {
  display: flex;
  height: 20px;
  align-items: center;
}
.lvl-0 { padding-left: 16px; }
.lvl-1 { padding-left: 34px; }
.lvl-2 { padding-left: 52px; }
.exp {
  width: 23px;
  flex: none;
  padding-left: 4px;
  box-sizing: border-box;
  display: flex;
}
.chip {
  height: 20px;
  background: #f2f2f2;
  display: flex;
  align-items: center;
  position: relative;
}
.chip.hatch::after {
  content: '';
  position: absolute;
  left: 25px;
  right: 2px;
  bottom: 2px;
  height: 3px;
  background: repeating-linear-gradient(120deg, #5f7fb5 0 1.5px, transparent 1.5px 4px);
}
.eye {
  margin-left: 3px;
  margin-right: 3px;
  flex: none;
}
.node {
  height: 20px;
  display: flex;
  align-items: center;
  padding: 0 10px 0 3px;
  box-sizing: border-box;
}
.node.with-eye { margin-left: 3px; }
.name {
  margin-left: 14px;
  white-space: nowrap;
  letter-spacing: -.12px;
}
.node.root { background: #8f8f8f; }
.node.root .name, .node.active .name {
  color: #fff;
  font-weight: bold;
  letter-spacing: 0;
}
.node.active { background: #0696d7; }
.radio { margin: 0 7px 0 4px; }

/* tooltip */
.tip {
  position: absolute;
  background: #f1f1f1;
  color: #3d3d60;
  white-space: nowrap;
  overflow: hidden;
}
.tip-back {
  left: 792px;
  top: 550px;
  width: 55px;
  height: 34px;
  padding-left: 8px;
  box-sizing: border-box;
  line-height: 30px;
}
.tip-front {
  left: 780px;
  top: 563px;
  width: 67px;
  height: 18px;
  padding-left: 9px;
  box-sizing: border-box;
  line-height: 17px;
}
.tip-front .caret { margin-left: 8px; }

/* loft panel */
.loft {
  position: absolute;
  left: 1062px;
  top: 124px;
  width: 300px;
  height: 461px;
  box-sizing: border-box;
  background: #f1f1f1;
  border: 1px solid #ccc;
  display: flex;
  flex-direction: column;
  color: #44444e;
}
.loft-head {
  height: 23px;
  flex: none;
  border-bottom: 1px solid #ccc;
  box-sizing: border-box;
  display: flex;
  align-items: center;
  padding: 0 5px 0 3px;
}
.loft-head .grip { margin-right: 5px; }
.loft-title {
  margin-left: 3px;
  color: #666;
}
.loft-ff { margin-left: auto; }
.field {
  display: flex;
  align-items: center;
  padding-left: 12px;
  flex: none;
}
.field label {
  width: 87px;
  flex: none;
}
.pick {
  width: 24px;
  height: 27px;
  display: flex;
  align-items: center;
  justify-content: center;
  flex: none;
}
.pick.on { background: #0696d7; }
.f-profiles { height: 27px; margin-top: 3px; }
.table {
  margin-left: 9px;
  width: 276px;
  box-sizing: border-box;
  background: #fff;
  border: 2px solid #e2e2e2;
  flex: none;
  display: flex;
  flex-direction: column;
}
.t-profiles { margin-top: 6px; height: 87px; }
.p-row {
  height: 25px;
  flex: none;
  display: grid;
  grid-template-columns: 68px 24px 12px 34px 20px 1fr 20px;
  align-items: center;
  padding-left: 3px;
}
.p-row.sel { background: #a8cdfb; height: 26px; margin-top: 1px; }
.p-row svg { display: block; }
.t-actions {
  display: flex;
  align-items: center;
  gap: 16px;
  padding-left: 8px;
  margin-top: auto;
  height: 26px;
  flex: none;
}
.f-guide { height: 27px; margin-top: 4px; }
.alt { margin-left: 6px; }
.f-rails { height: 26px; margin-top: 4px; }
.rail-cursor { margin-left: 7px; }
.t-rails { margin-top: 7px; height: 87px; }
.f-chain { height: 20px; margin-top: 7px; }
.f-closed { height: 20px; margin-top: 10px; }
.check {
  display: block;
  width: 13px;
  height: 13px;
  box-sizing: border-box;
  border: 1px solid #555;
  border-radius: 3px;
  background: linear-gradient(#f0f0f0, #bdbdbd);
}
.f-tangent { height: 27px; margin-top: 6px; }
.f-op { height: 27px; margin-top: 3px; }
.select {
  width: 185px;
  height: 27px;
  box-sizing: border-box;
  background: #fff;
  border: 2px solid #e2e2e2;
  display: flex;
  align-items: center;
  padding: 0 7px 0 2px;
  gap: 3px;
  border-radius: 2px;
}
.select .caret { margin-left: auto; }
.loft-foot {
  margin-top: 3px;
  flex: 1;
  border-top: 1px solid #ccc;
  display: flex;
  align-items: center;
  padding: 0 11px 0 8px;
}
.btn {
  width: 60px;
  height: 19px;
  box-sizing: border-box;
  border: 1px solid #c8c8c8;
  background: #e8e8e8;
  font: 12px 'Liberation Sans', Arial, sans-serif;
  color: #666;
  padding: 0;
}
.b-ok { margin-left: auto; color: #777; }
.b-cancel { margin-left: 10px; }
</style>

<style>
html, body {
  margin: 0;
  overflow: hidden;
  background: #fff;
}
</style>
